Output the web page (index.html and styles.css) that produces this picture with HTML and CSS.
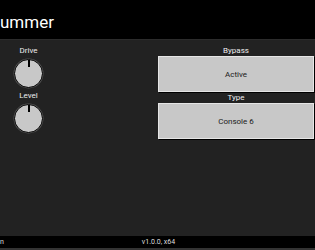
FILE: index.html
```html
<!DOCTYPE html>
<html>
<head>
<meta charset="utf-8">
<link rel="stylesheet" href="styles.css">
</head>
<body>
<div class="app">
  <header class="header"><span class="title">ummer</span></header>
  <main class="main">
    <div class="knobs">
      <div class="control">
        <div class="label">Drive</div>
        <div class="knob"><span class="tick"></span></div>
      </div>
      <div class="control">
        <div class="label">Level</div>
        <div class="knob"><span class="tick"></span></div>
      </div>
    </div>
    <div class="spacer"></div>
    <div class="buttons">
      <div class="control">
        <div class="label">Bypass</div>
        <div class="btn">Active</div>
      </div>
      <div class="control">
        <div class="label">Type</div>
        <div class="btn">Console 6</div>
      </div>
    </div>
  </main>
  <footer class="footer">
    <span class="foot-left">n</span>
    <span class="foot-center">v1.0.0, x64</span>
  </footer>
</div>
</body>
</html>
```
FILE: styles.css
```css
html, body {
  margin: 0;
  padding: 0;
  background: #222222;
}
body {
  font-family: Roboto, "Liberation Sans", sans-serif;
  color: #fff;
}
.app {
  width: 315px;
  height: 250px;
  display: flex;
  flex-direction: column;
  overflow: hidden;
}
.header {
  height: 40px;
  background: #000;
  display: flex;
  align-items: center;
  border-bottom: 1px solid #2c2c2c;
  box-sizing: border-box;
}
.title {
  font-size: 17px;
  padding-top: 4px;
}
.main {
  flex: 1;
  display: flex;
  padding: 6px 1px 0 0;
}
.knobs {
  width: 57px;
  display: flex;
  flex-direction: column;
  align-items: center;
  gap: 3px;
}
.knobs .control {
  display: flex;
  flex-direction: column;
  align-items: center;
}
.label {
  font-size: 8px;
  line-height: 10px;
  text-align: center;
  color: #eee;
}
.knob {
  position: relative;
  width: 27px;
  height: 27px;
  margin-top: 3px;
  border-radius: 50%;
  background: #c8c8c8;
  border: 1.5px solid #000;
  box-shadow: 0 0 0 0.5px #555;
}
.tick {
  position: absolute;
  left: 50%;
  top: 0;
  width: 2px;
  height: 7px;
  margin-left: -1px;
  background: #000;
}
.spacer {
  width: 101px;
}
.buttons {
  flex: 1;
  display: flex;
  flex-direction: column;
}
.buttons .control {
  display: flex;
  flex-direction: column;
}
.btn {
  height: 34px;
  background: #c8c8c8;
  color: #1a1a1a;
  font-size: 8px;
  display: flex;
  align-items: center;
  justify-content: center;
  border: 1px solid #e6e6e6;
  box-shadow: 1px 1px 0 #000;
  margin-bottom: 1px;
}
.footer {
  height: 12px;
  background: #000;
  border-bottom: 2px solid #333;
  position: relative;
  font-size: 7px;
  display: flex;
  align-items: center;
  justify-content: center;
  color: #ddd;
}
.foot-left {
  position: absolute;
  left: 0;
  top: 2px;
}
.foot-center {
  margin-left: 2px;
}
```
